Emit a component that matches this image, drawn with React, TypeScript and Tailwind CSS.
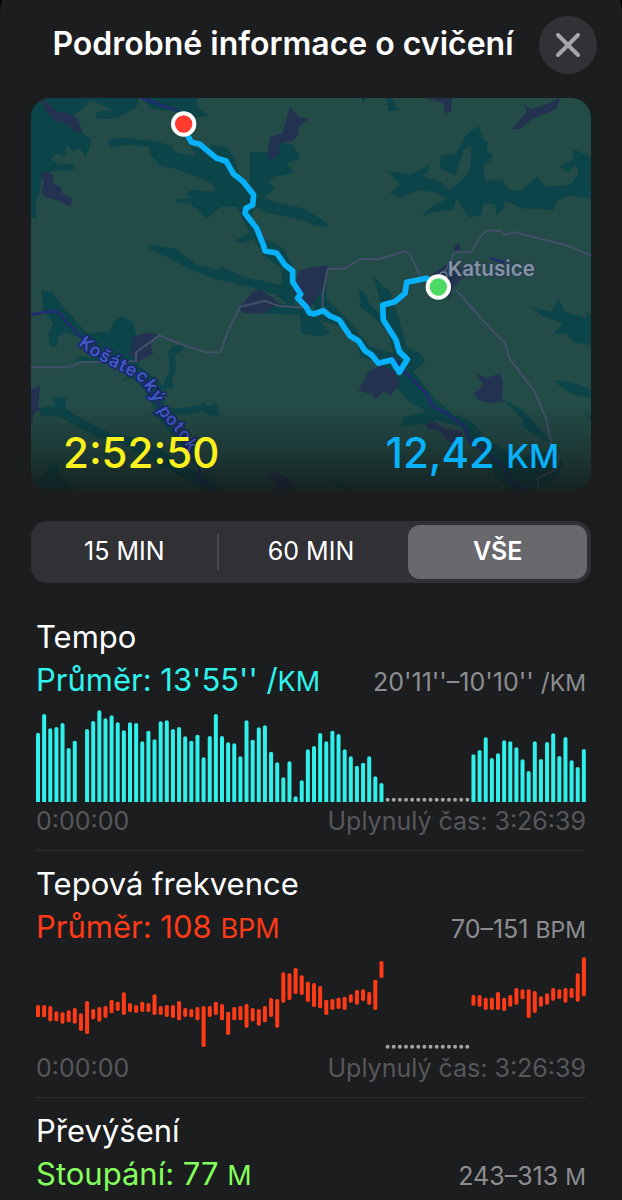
import { useState, type ReactNode } from "react";

type Bar = { slot: number; top: number; bottom: number };

const SLOT = 18.4;
const CHART_HEIGHT = 276;

const PAUSE_SLOTS = Array.from({ length: 14 }, (_, i) => 57 + i);

const paceStart = [
  208, 264, 221, 225, 237, 162, 184, 0, 219, 243, 275, 251, 260, 239, 215, 239, 237, 182, 214, 188,
  242, 245, 219, 225, 197, 184, 202, 134, 198, 264, 198, 179, 176, 137, 245, 187, 224, 230, 151, 119,
  74, 122, 17, 65, 158, 168, 207, 182, 214, 204, 158, 137, 109, 118, 137, 77, 57,
];
const paceEnd = [
  143, 156, 194, 132, 146, 185, 182, 164, 128, 93, 182, 129, 180, 206, 138, 195, 125, 105, 159,
];

const heartStart = [
  [183, 220], [183, 220], [186, 232], [202, 232], [205, 239], [199, 235], [192, 239], [208, 261],
  [171, 270], [195, 226], [189, 233], [186, 222], [167, 208], [173, 201], [145, 213], [177, 204],
  [183, 207], [173, 204], [177, 204], [151, 213], [186, 213], [183, 219], [183, 222], [171, 229],
  [192, 219], [195, 220], [189, 229], [186, 309], [186, 219], [173, 213], [180, 229], [203, 273],
  [189, 229], [186, 229], [180, 251], [192, 232], [195, 245], [186, 235], [162, 219], [165, 251],
  [85, 176], [88, 168], [72, 150], [94, 153], [113, 174], [117, 189], [126, 193], [167, 213],
  [165, 198], [161, 195], [158, 198], [151, 176], [138, 182], [136, 171], [144, 182], [107, 198],
  [51, 102],
];
const heartEnd = [
  [153, 185], [153, 188], [161, 198], [161, 198], [144, 198], [161, 201], [153, 188], [132, 182],
  [136, 166], [136, 222], [141, 207], [157, 188], [148, 182], [132, 170], [136, 165], [132, 176],
  [132, 162], [88, 173], [40, 157],
];

const paceBars: Bar[] = [
  ...paceStart.map((h, i) => ({ slot: i, top: CHART_HEIGHT - h, bottom: CHART_HEIGHT })),
  ...paceEnd.map((h, i) => ({ slot: 71 + i, top: CHART_HEIGHT - h, bottom: CHART_HEIGHT })),
].filter((b) => b.top < b.bottom);

const heartBars: Bar[] = [
  ...heartStart.map(([t, b], i) => ({ slot: i, top: t - 39, bottom: b - 39 })),
  ...heartEnd.map(([t, b], i) => ({ slot: 71 + i, top: t - 39, bottom: b - 39 })),
];

function Chart({ bars, color, label, flat }: { bars: Bar[]; color: string; label: string; flat?: boolean }) {
  return (
    <svg viewBox="0 0 1650 276" className="mt-[7px] block w-full" role="img" aria-label={label}>
      {bars.map(({ slot, top, bottom }) => {
        const x = slot * SLOT;
        return flat ? (
          <path key={slot} fill={color} d={`M${x} ${bottom}V${top + 5}Q${x} ${top} ${x + 6} ${top}Q${x + 12} ${top} ${x + 12} ${top + 5}V${bottom}Z`} />
        ) : (
          <rect key={slot} x={x} y={top} width="12" height={bottom - top} rx="5" fill={color} />
        );
      })}
      {PAUSE_SLOTS.map((slot) => (
        <circle key={slot} cx={slot * SLOT + 6} cy="269" r="6" fill="#a3a3a6" />
      ))}
    </svg>
  );
}

function Metric({
  title,
  average,
  unit,
  range,
  rangeUnit,
  colorClass,
  children,
}: {
  title: string;
  average: string;
  unit: string;
  range: string;
  rangeUnit: string;
  colorClass: string;
  children?: ReactNode;
}) {
  return (
    <section className="border-b border-[#2e2e31] pt-[11px] last:border-b-0">
      <h2 className="text-[31px] leading-[44px] text-white">{title}</h2>
      <div className="flex h-11 items-baseline justify-between">
        <p className={`text-[31px] leading-[42px] ${colorClass}`}>
          {average}
          <span className="text-[27px] leading-none">{unit}</span>
        </p>
        <p className="text-[25px] leading-none text-[#8d8d91]">
          {range}
          <span className="text-[23px] leading-none">{rangeUnit}</span>
        </p>
      </div>
      {children && (
        <>
          {children}
          <div className="mt-[3px] flex justify-between pb-[13px] text-[25px] leading-8 text-[#57575a]">
            <span>0:00:00</span>
            <span>Uplynulý čas: 3:26:39</span>
          </div>
        </>
      )}
    </section>
  );
}

function RouteMap() {
  return (
    <svg viewBox="0 0 1680 1176" className="block w-full" role="img" aria-label="Mapa trasy">
      <defs>
        <linearGradient id="shade" x1="0" y1="0" x2="0" y2="1">
          <stop offset="0" stopColor="#101413" stopOpacity="0" />
          <stop offset="0.5" stopColor="#101413" stopOpacity="0.3" />
          <stop offset="1" stopColor="#101413" stopOpacity="0.72" />
        </linearGradient>
        <path id="streamLabel" d="M141 740 C200 790 260 812 318 843 C352 868 372 920 392 958 C425 990 455 1020 500 1110" />
      </defs>
      <rect width="1680" height="1176" fill="#234b47" />

      <g fill="#0b4449">
        <g transform="translate(-3 -9)">
          <path d="M0 0H330L320 35L260 70L200 72L197 52L250 45L215 30L180 15L160 40L130 60L158 115L182 130L180 160L165 185L150 160L130 170L110 150L105 185L80 175L62 192L90 210L135 205L130 225L60 230L35 240L30 290L15 330L22 370L0 370Z" />
          <path d="M330 0H500L505 40L540 62L500 68L440 50L360 40Z" />
          <path d="M232 140Q260 122 320 133L380 140L425 153L435 172L500 185L480 150L530 170L545 150L590 158L615 190L625 235L650 260L690 305L740 325L820 340L855 360L880 378L895 388V397L855 393L820 375L770 365L700 350L670 330L665 370L690 395L700 430L760 460L790 520L800 590L790 640L740 600L640 570L560 553L470 520L420 490L352 460L360 447L440 462L500 510L560 525L575 515L640 545L710 560L755 570V520L700 480L670 432L635 445L615 438L660 410L635 370L620 335L570 335L530 372L480 325L440 322L438 312L485 308L465 295L490 285L555 290L550 268L490 240L430 220L395 215L365 185L355 155L300 150L240 155Z" />
          <path d="M660 170L710 172L745 140L790 150L812 190L770 205L790 235L735 245L715 265L735 280L700 310L660 265Z" />
        </g>
        <g transform="translate(-3 576)">
          <path d="M35 0L65 5L95 45L140 95L170 130L240 125L250 95L275 78L310 100L318 140L300 185L330 230L375 265L400 290L405 270L420 240L415 185L430 168L460 165V178L435 195L438 240L425 270L430 295L395 300L405 330L400 355L450 355L510 345L520 335L535 350L558 338L570 375L545 378L520 365L460 375L440 370L440 395L480 450L510 510L500 530L440 450L380 378L360 372L375 362L350 310L310 265L270 275L300 255L265 225L200 218L140 215V200L215 205L160 150L110 125L85 140L80 170L60 168L55 130L70 100L40 60Z" />
          <path d="M30 355L80 345L60 320L110 325L105 355L160 390L240 430L330 445L410 490L460 530L540 560L580 597H520L430 545L340 500L280 460L210 445L140 410L90 380L30 375Z" />
          <path d="M0 570L45 555L60 520L85 520L90 560L130 597H0Z" />
          <path d="M700 70L740 40L800 45L860 80L900 130L870 140L815 130L810 75Z" />
        </g>
        <g transform="translate(837 -9)">
          <path d="M155 0H165L163 27L152 10ZM225 0H245L255 30L268 45L235 48Z" />
          <path d="M233 228L300 240L360 207L355 228L335 242L390 260L420 285L460 250L480 220L485 150L460 165L435 243L390 220L392 182L440 175L465 125L505 90L520 135L535 140L530 170L548 180L535 205L520 210L525 258L575 255L600 285L635 285L680 245L705 275L780 270L805 240L798 210L775 232L748 215L790 195L788 162L843 185V312L780 300L745 315L730 345L635 340L585 315L580 345L560 362L555 328L520 325L515 360L475 368L440 310L430 345L380 350L337 362L350 345L410 310L370 290L325 285L275 308L240 295L270 270Z" />
        </g>
        <g transform="translate(837 576)">
          <path d="M190 -45L215 -15L240 5L255 50L290 170Q340 190 345 215L310 245L370 320L430 375Q505 390 515 440L570 470L620 500L740 480L760 520L740 560L690 597H600L555 560L540 510L480 450L450 410L380 390L330 405L270 408L285 380L350 365L290 330L255 285L210 220L150 200L140 150L90 110L30 90L0 20L-10 -60L45 -60L50 30L110 85L180 170L250 190L235 130L190 80L150 50L148 0L165 10L180 45L215 75L210 30Z" />
          <path d="M660 50L725 65L745 25L765 65L830 85V65L843 75V165L790 155L770 130L730 133L760 100L700 80ZM733 275Q760 262 843 300V325L780 310ZM580 330L640 360L700 430L725 460L700 450L635 410L640 390ZM825 372L843 375V390ZM60 570L120 590V597L75 590Z" />
        </g>
      </g>

      <g fill="#243252">
        <g transform="translate(-3 -9)">
          <path d="M20 0L60 30L80 48L125 58L145 75L157 112L135 110L105 83L75 80L50 50ZM30 240L50 227L68 240L72 268L95 275V295L127 312L122 335L90 318L45 306L35 290L42 265ZM780 35L805 65L835 73L805 98V120L790 137L745 145L750 172L725 195L712 185L720 125L758 115Z" />
          <path d="M805 528L855 515L895 512L890 560L870 595L830 650L790 590ZM668 592L690 582L730 610L748 625L700 655L640 655L625 640Z" />
        </g>
        <g transform="translate(-3 576)">
          <path d="M310 140L350 128L390 135L360 160L370 190L325 215L300 195ZM0 300L30 287L25 340L30 360L15 365L5 400H0ZM715 550L735 547L785 570L788 597H735L740 580L718 570Z" />
        </g>
        <g transform="translate(837 -9)">
          <path d="M350 10L425 0L423 50L405 57L400 25ZM605 103L650 52L643 28L665 42L720 25L750 5L740 42L670 70L630 102ZM435 450L450 448V465L430 475ZM370 535L430 495L470 540L430 575L420 610L385 590Z" />
        </g>
        <g transform="translate(837 576)">
          <path d="M145 302L175 245L215 225L255 245L270 282L240 318L225 302L195 328L185 312ZM495 250L530 265L570 250L580 285L575 320L582 335L545 340L510 333L490 312L520 285ZM345 402L380 395L395 412L460 425L440 460L415 455L385 420L355 418Z" />
        </g>
      </g>

      <g fill="none" stroke="#43506a" strokeWidth="6" strokeLinejoin="round">
        <path d="M-3 808H112L150 792H215L315 790V763L385 712L440 735L525 763H568L590 700L628 626L702 609L740 623L835 631" />
        <path d="M875 638V590L890 512H940L990 483H1045L1120 460L1137 470L1170 540M1240 525L1270 463H1320L1345 420L1365 398H1405L1420 410L1450 403L1600 440L1680 472" />
        <path d="M1275 576L1390 705L1422 735L1435 780L1510 880L1545 960L1560 1035L1585 1080L1575 1115L1520 1140V1176" />
      </g>
      <g fill="none" stroke="#222c70" strokeWidth="8" strokeLinejoin="round">
        <path d="M0 650L50 641H80L100 665L145 712Q190 760 310 822Q360 860 400 950Q460 1010 505 1110V1145L550 1176" />
        <path d="M330 0L440 38M1060 785L1085 778L1130 830L1185 885L1205 925L1245 945L1300 985L1315 1030L1370 1065L1420 1110L1435 1150L1490 1176M1377 480L1420 493" />
      </g>

      <text fontFamily="Inter, sans-serif" fontSize="52" fontWeight="600" fill="#4159c5" stroke="#182766" strokeWidth="9" paintOrder="stroke" letterSpacing="4">
        <textPath href="#streamLabel">Košátecký potok</textPath>
      </text>
      <circle cx="1237" cy="533" r="11" fill="none" stroke="#6f7f90" strokeWidth="4" />
      <text x="1250" y="535" fontFamily="Inter, sans-serif" fontSize="62" fontWeight="600" fill="#8493a4" stroke="#283f50" strokeWidth="7" paintOrder="stroke">
        Katusice
      </text>

      <rect y="920" width="1680" height="256" fill="url(#shade)" />

      <path
        d="M458 78L472 116L482 133L507 139L557 181L585 189L607 227L637 251L668 291L665 321L645 331L642 346L677 391L697 441L702 459L737 465L762 501L785 519L785 551L809 589L800 600L825 626L835 644L849 648L877 638L897 654L925 666L957 714L982 728L1002 758L1022 771L1042 796L1082 786L1105 823L1129 784L1105 761L1095 726L1057 666L1055 621L1092 611L1122 586L1127 553L1187 541L1222 567"
        fill="none"
        stroke="#08b2fb"
        strokeWidth="17"
        strokeLinejoin="round"
      />
      <circle cx="458" cy="78" r="32" fill="#ff3b30" stroke="#fff" strokeWidth="12" />
      <circle cx="1222" cy="567" r="32" fill="#4cd964" stroke="#fff" strokeWidth="12" />
    </svg>
  );
}

const RANGES = ["15 MIN", "60 MIN", "VŠE"];

export default function App() {
  const [selected, setSelected] = useState(2);

  return (
    <div className="min-h-screen bg-black font-['Inter',sans-serif]">
      <main className="min-h-screen bg-[#1c1d1f] [border-radius:3px_3px_0_0/16px_16px_0_0]">
        <header className="flex items-center pt-4 pr-[25px] pl-[27px]">
          <h1 className="flex-1 pb-0.5 text-center text-[32px] leading-[44px] font-semibold whitespace-nowrap text-white">
            Podrobné informace o cvičení
          </h1>
          <button type="button" aria-label="Zavřít" className="grid size-[58px] shrink-0 place-items-center rounded-full bg-[#313136]">
            <svg viewBox="0 0 24 24" className="size-6" fill="none" stroke="#a5a5ac" strokeWidth="4" strokeLinecap="round">
              <path d="M2 2L22 22M22 2L2 22" />
            </svg>
          </button>
        </header>

        <div className="px-[31px]">
          <div className="relative mt-6 overflow-hidden rounded-[20px]">
            <RouteMap />
            <div className="absolute inset-x-8 bottom-3 flex items-baseline justify-between text-[42px] leading-[50px] font-medium">
              <span className="text-[#fbf11c]">2:52:50</span>
              <span className="text-[#08b2fb]">
                12,42 <span className="text-[33px] leading-none">KM</span>
              </span>
            </div>
          </div>

          <div className="mt-[31px] flex items-center rounded-2xl bg-[#313035] py-1" role="group" aria-label="Časový úsek">
            {RANGES.map((label, i) => (
              <div key={label} className="flex flex-1 items-center">
                {i > 0 && (
                  <span className={`-mx-px h-9 w-0.5 ${selected !== i && selected !== i - 1 ? "bg-[#4a494e]" : "bg-transparent"}`} />
                )}
                <button
                  type="button"
                  aria-pressed={selected === i}
                  onClick={() => setSelected(i)}
                  className={`mx-1 h-[54px] flex-1 rounded-xl text-[25px] text-white ${selected === i ? "bg-[#69686d] font-semibold" : "font-normal"}`}
                >
                  {label}
                </button>
              </div>
            ))}
          </div>
        </div>

        <div className="mt-[21px] px-9">
          <Metric title="Tempo" average="Průměr: 13'55'' /" unit="KM" range="20'11''–10'10'' /" rangeUnit="KM" colorClass="text-[#2ff3ed]">
            <Chart bars={paceBars} color="#2ff0ea" label="Graf tempa" flat />
          </Metric>
          <Metric title="Tepová frekvence" average="Průměr: 108 " unit="BPM" range="70–151 " rangeUnit="BPM" colorClass="text-[#ff3a17]">
            <Chart bars={heartBars} color="#ff3a17" label="Graf tepové frekvence" />
          </Metric>
          <Metric title="Převýšení" average="Stoupání: 77 " unit="M" range="243–313 " rangeUnit="M" colorClass="text-[#84ff5c]" />
        </div>
      </main>
    </div>
  );
}
